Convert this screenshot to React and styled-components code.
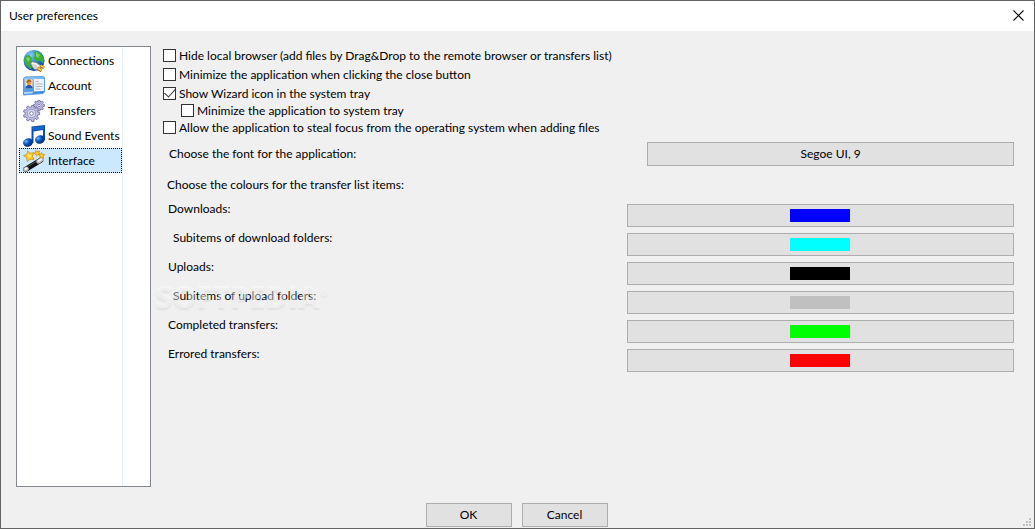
import React, { useState } from "react";
import styled, { createGlobalStyle } from "styled-components";

const GlobalStyle = createGlobalStyle`
  * { box-sizing: border-box; }
  body { margin: 0; background: #f0f0f0; }
  body, button, input { font-family: "Segoe UI", Lato, sans-serif; font-size: 12px; line-height: 16px; color: #000; }
`;

const Window = styled.main`
  display: flex;
  flex-direction: column;
  min-height: 100vh;
  border: 1px solid #646464;
  background: #f0f0f0;
  position: relative;
`;

const TitleBar = styled.header`
  display: flex;
  align-items: center;
  justify-content: space-between;
  height: 30px;
  padding: 0 10px 2px 8px;
  background: #fff;
`;

const Title = styled.h1`
  margin: 2px 0 0;
  font-size: 12px;
  font-weight: 400;
`;

const CloseButton = styled.button`
  display: flex;
  padding: 0;
  border: 0;
  background: none;
`;

const Content = styled.div`
  display: flex;
  flex: 1;
  align-items: stretch;
  gap: 12px;
  padding: 15px 20px 16px 15px;
`;

const Sidebar = styled.nav`
  flex: 0 0 135px;
  border: 1px solid #828790;
  background: #fff;
`;

const SidebarColumn = styled.div`
  display: flex;
  flex-direction: column;
  width: 106px;
  height: 100%;
  padding: 1px 0 0 2px;
  border-right: 1px solid #e5f1fb;
`;

const SidebarItem = styled.button`
  display: flex;
  align-items: center;
  gap: 3px;
  height: 25px;
  padding: 0 0 0 3px;
  border: 1px ${(p) => (p.$selected ? "dotted #000" : "solid transparent")};
  background: ${(p) => (p.$selected ? "#cce8ff" : "transparent")};
  white-space: nowrap;
  text-align: left;
  svg { flex: none; }
`;

const Panel = styled.section`
  flex: 1;
  min-width: 0;
  padding-top: 1px;
`;

const CheckRow = styled.label`
  display: flex;
  align-items: center;
  gap: 3px;
  height: 17px;
  margin-bottom: ${(p) => (p.$spaced ? 2 : 0)}px;
  padding-left: ${(p) => (p.$nested ? 18 : 0)}px;
`;

const CheckBox = styled.input`
  appearance: none;
  display: grid;
  place-items: center;
  width: 13px;
  height: 13px;
  margin: 0;
  border: 1px solid #333;
  background: #fff;
  &:checked::after {
    content: "";
    width: 5px;
    height: 10px;
    margin-top: -4px;
    border: solid #333;
    border-width: 0 1px 1px 0;
    transform: rotate(42deg);
  }
`;

const FontRow = styled.div`
  display: grid;
  grid-template-columns: 33fr 25fr;
  align-items: center;
  margin-top: 6px;
`;

const Label = styled.span`
  padding-left: ${(p) => p.$indent}px;
`;

const PushButton = styled.button`
  display: flex;
  align-items: center;
  justify-content: center;
  height: ${(p) => (p.$short ? 23 : 24)}px;
  width: ${(p) => (p.$fixed ? "86px" : "100%")};
  padding: ${(p) => (p.$short ? "0 1px 0 0" : "0")};
  border: 1px solid #adadad;
  background: #e1e1e1;
`;

const Heading = styled.h2`
  margin: 11px 0;
  padding-left: 4px;
  font-size: 12px;
  font-weight: 400;
`;

const ColourGrid = styled.div`
  display: grid;
  grid-template-columns: 6fr 5fr;
  row-gap: 6px;
`;

const ColourLabel = styled.span`
  margin-top: -3px;
  padding-left: ${(p) => (p.$nested ? 10 : 5)}px;
`;

const Swatch = styled.span`
  width: 60px;
  height: 13px;
  background: ${(p) => p.$colour};
`;

const Footer = styled.footer`
  display: flex;
  justify-content: center;
  gap: 10px;
  padding: 0 2px 1px 0;
`;

const Watermark = styled.div`
  position: absolute;
  left: 154px;
  top: 279px;
  font: 800 30px/34px "Open Sans", sans-serif;
  color: rgba(255, 255, 255, 0.45);
  text-shadow: 0 2px 2px rgba(0, 0, 0, 0.06);
  pointer-events: none;
  sup { font-size: 10px; line-height: 0; vertical-align: 12px; }
`;

const Grip = styled.svg`
  position: absolute;
  right: 3px;
  bottom: 2px;
`;

const GlobeIcon = () => (
  <svg width="22" height="22" viewBox="0 0 22 22" aria-hidden="true">
    <defs>
      <radialGradient id="sea" cx="0.35" cy="0.25" r="0.8">
        <stop offset="0" stopColor="#8ccaf4" />
        <stop offset="0.5" stopColor="#2482dc" />
        <stop offset="1" stopColor="#073e9c" />
      </radialGradient>
    </defs>
    <circle cx="11" cy="10.5" r="10.5" fill="url(#sea)" />
    <path d="M11 .5l4 1 4 3 2 5-1 4-3-3-2 1-3-1-2-3 2-2-1-2 1-2zM2 6l4-1 3 3-1 3 1 2-2 2 2 3-2 1-4-4-2-4z" fill="#3fae3c" />
    <path d="M13 2l4 3-2 3-2-2zM3 8l3-1 1 2-2 3z" fill="#7fd45c" />
    <path d="M7.500 13l2-1.500 4 1 4 3 .5 3-2.500 1.500-4-.5-3-3.500z" fill="#d8d5cc" stroke="#77736b" strokeWidth="0.8" />
    <path d="M9 13.500l4 .5 3 2.500" stroke="#fff" fill="none" strokeWidth="1.200" />
    <path d="M17.500 15.500l3.500 2.500M14.500 18l4 3" stroke="#9a6814" strokeWidth="3" />
    <path d="M17.500 15.500l3.500 2M14.500 18l4 2.500" stroke="#f6cc48" strokeWidth="1.600" />
  </svg>
);

const AccountIcon = () => (
  <svg width="22" height="22" viewBox="0 0 22 22" aria-hidden="true">
    <defs>
      <linearGradient id="card" x2="0.3" y2="1">
        <stop offset="0" stopColor="#9fd0fb" />
        <stop offset="1" stopColor="#3a88de" />
      </linearGradient>
    </defs>
    <path d="M.5 3.500 2 2 20 1.500l1.500 1V17L20 18.500.5 20z" fill="url(#card)" stroke="#5a9bde" />
    <path d="M11 4h10v12l-10 .5z" fill="#eef1f5" />
    <path d="M2.500 4.500h7v9h-7z" fill="#ffe3a7" />
    <path d="M2.500 13.500V12l2-2h3l2 2v1.500z" fill="#1a54b5" />
    <circle cx="6" cy="8" r="2.200" fill="#e99945" />
    <path d="M3.500 8V6L5 4.500h2L8.500 6v1.500L7 6.500z" fill="#a9601c" />
    <path d="M12.500 6.500h3M12.500 9h7M12.500 11.500h7M12.500 14h5" stroke="#a9b5c2" />
    <path d="M1 17l10-.5-2 2-8 .5z" fill="#b4d9f8" />
  </svg>
);

const gearPath = (r, teeth) => {
  const points = [];
  for (let i = 0; i < teeth; i++) {
    [[-0.3, 0.78], [-0.2, 1], [0.2, 1], [0.3, 0.78]].forEach(([turn, size]) => {
      const angle = ((i + turn) / teeth) * Math.PI * 2;
      points.push(`${(Math.cos(angle) * r * size).toFixed(2)} ${(Math.sin(angle) * r * size).toFixed(2)}`);
    });
  }
  return `M${points.join("L")}z`;
};

const Cog = ({ x, y, r, teeth }) => (
  <g transform={`translate(${x} ${y})`} strokeWidth="0.8">
    <path d={gearPath(r, teeth)} fill="#c0c0e4" stroke="#66669a" strokeLinejoin="round" />
    <circle r={r * 0.5} fill="#dcdcf3" stroke="#8c8cba" />
    <circle r={r * 0.22} fill="#fff" stroke="#66669a" />
  </g>
);

const GearsIcon = () => (
  <svg width="22" height="22" viewBox="0 0 22 22" aria-hidden="true">
    <Cog x={16} y={5.5} r={5.5} teeth={8} />
    <Cog x={8.5} y={13.5} r={8.2} teeth={9} />
  </svg>
);

const MusicIcon = () => (
  <svg width="22" height="22" viewBox="0 0 22 22" aria-hidden="true">
    <defs>
      <radialGradient id="note" cx="0.35" cy="0.3">
        <stop offset="0" stopColor="#74b9fb" />
        <stop offset="0.5" stopColor="#176bd1" />
        <stop offset="1" stopColor="#05398e" />
      </radialGradient>
    </defs>
    <path d="M8.500 1.500 22 0v15h-2V5L10.500 6.500V18h-2z" fill="#0c4caa" />
    <path d="M9 2.500l12-1.500v3L9.500 5.500z" fill="#1566c8" />
    <ellipse cx="5" cy="17.500" rx="5" ry="4.200" fill="url(#note)" transform="rotate(-18 5 17.500)" />
    <ellipse cx="17" cy="14.500" rx="5" ry="4.200" fill="url(#note)" transform="rotate(-18 17 14.500)" />
  </svg>
);

const WandIcon = () => (
  <svg width="22" height="22" viewBox="0 0 22 22" aria-hidden="true">
    <path d="M2.500 19.500 18 10" stroke="#111" strokeWidth="5" strokeLinecap="round" />
    <path d="M5 16.500 13 11.600" stroke="#666" strokeWidth="0.8" />
    <path d="M2.500 19.500l1-.6M15.500 11.500l3-2" stroke="#b9b9b9" strokeWidth="4.500" strokeLinecap="round" />
    <path d="M2.500 19l1-.5M15.500 11l2.500-1.700" stroke="#f4f4f4" strokeWidth="2" strokeLinecap="round" />
    <g fill="#ffc91f" stroke="#c48a10" strokeWidth="0.7" strokeLinejoin="round">
      <path d="M4.500 .8l2.500 2.400 3.800-.4L9.300 6l1.700 3.500-3.800-.3-3 2.200-.6-3.600L.5 5.500 4 4.500z" />
      <path d="M13 .5l1 1.200L16.500 1l-.7 2L17 4.700l-2.200.1-1.500 1.400-.5-2-2-1L12.500 2.300z" />
      <path d="M18.500 2.500l1 1.800 2.200.2-1.500 1.700.5 2.300-2-1-2 .5.500-2-1.500-1.500 2-.5z" />
    </g>
    <path d="M4 5.500l1.200-2 1.300 1.500L9 5 7.500 6.500 8 8 6 7.500z" fill="#ffe566" />
  </svg>
);

const sections = [
  ["Connections", GlobeIcon],
  ["Account", AccountIcon],
  ["Transfers", GearsIcon],
  ["Sound Events", MusicIcon],
  ["Interface", WandIcon],
];

const options = [
  { text: "Hide local browser (add files by Drag&Drop to the remote browser or transfers list)", spaced: true },
  { text: "Minimize the application when clicking the close button", spaced: true },
  { text: "Show Wizard icon in the system tray", checked: true },
  { text: "Minimize the application to system tray", nested: true },
  { text: "Allow the application to steal focus from the operating system when adding files" },
];

const colours = [
  { text: "Downloads:", colour: "#0000ff" },
  { text: "Subitems of download folders:", colour: "#00ffff", nested: true },
  { text: "Uploads:", colour: "#000000" },
  { text: "Subitems of upload folders:", colour: "#c0c0c0", nested: true },
  { text: "Completed transfers:", colour: "#00ff00" },
  { text: "Errored transfers:", colour: "#ff0000" },
];

export default function App() {
  const [selected, setSelected] = useState("Interface");
  return (
    <Window>
      <GlobalStyle />
      <TitleBar>
        <Title>User preferences</Title>
        <CloseButton aria-label="Close">
          <svg width="11" height="11" viewBox="0 0 11 11">
            <path d="M.5.5l10 10M10.500.5l-10 10" stroke="#000" strokeWidth="1.100" />
          </svg>
        </CloseButton>
      </TitleBar>
      <Content>
        <Sidebar aria-label="Sections">
          <SidebarColumn>
            {sections.map(([name, Icon]) => (
              <SidebarItem key={name} $selected={name === selected} onClick={() => setSelected(name)}>
                <Icon />
                {name}
              </SidebarItem>
            ))}
          </SidebarColumn>
        </Sidebar>
        <Panel>
          {options.map((o) => (
            <CheckRow key={o.text} $nested={o.nested} $spaced={o.spaced}>
              <CheckBox type="checkbox" defaultChecked={o.checked} />
              {o.text}
            </CheckRow>
          ))}
          <FontRow>
            <Label id="font-label" $indent={6}>Choose the font for the application:</Label>
            <PushButton aria-describedby="font-label">Segoe UI, 9</PushButton>
          </FontRow>
          <Heading>Choose the colours for the transfer list items:</Heading>
          <ColourGrid>
            {colours.map((c, i) => (
              <React.Fragment key={c.text}>
                <ColourLabel id={`colour-${i}`} $nested={c.nested}>{c.text}</ColourLabel>
                <PushButton $short aria-labelledby={`colour-${i}`}>
                  <Swatch $colour={c.colour} />
                </PushButton>
              </React.Fragment>
            ))}
          </ColourGrid>
        </Panel>
      </Content>
      <Footer>
        <PushButton $fixed>OK</PushButton>
        <PushButton $fixed>Cancel</PushButton>
      </Footer>
      <Watermark aria-hidden="true">SOFTPEDIA<sup>®</sup></Watermark>
      <Grip width="8" height="8" aria-hidden="true">
        <path d="M6 0h2v2H6zM3 3h2v2H3zM6 3h2v2H6zM0 6h2v2H0zM3 6h2v2H3zM6 6h2v2H6z" fill="#bfbfbf" />
      </Grip>
    </Window>
  );
}
